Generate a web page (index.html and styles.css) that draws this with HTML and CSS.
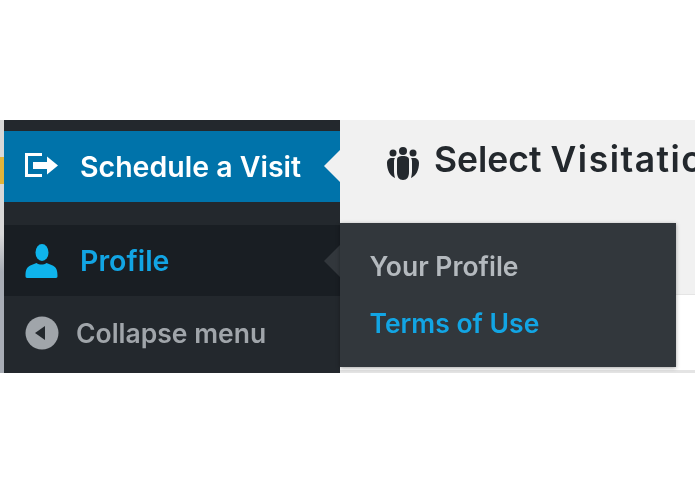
FILE: index.html
```html
<!DOCTYPE html>
<html lang="en">
<head>
<meta charset="utf-8">
<title>Schedule a Visit</title>
<link rel="stylesheet" href="styles.css">
</head>
<body>
<div class="frame">
  <div class="edge"><span class="edge-mark"></span></div>
  <nav class="sidebar">
    <div class="side-top"></div>
    <a class="item current">
      <svg class="icon" viewBox="0 0 35 35" aria-hidden="true"><path d="M1 4h17v3H4v18h14v3H1z" fill="#fff"/><path d="M9 13h14V7.500l11 9-11 9V20H9z" fill="#fff"/></svg>
      <span>Schedule a Visit</span>
    </a>
    <div class="side-gap"></div>
    <a class="item profile">
      <svg class="icon" viewBox="0 0 35 34" aria-hidden="true"><ellipse cx="18" cy="8.500" rx="6.500" ry="8.500" fill="#0fb4ec"/><path d="M3 34c-1 0-1.500-1-1.500-2 0-6 1-9 6-11l5-2c3 2 7 2 10 0l5 2c5 2 6 5 6 11 0 1-.5 2-1.500 2z" fill="#0fb4ec"/></svg>
      <span>Profile</span>
    </a>
    <a class="collapse">
      <svg class="collapse-icon" viewBox="0 0 34 34" aria-hidden="true"><circle cx="17" cy="17" r="16.500" fill="#a0a5aa"/><path d="M10 17l10-7v14z" fill="#23282d"/></svg>
      <span>Collapse menu</span>
    </a>
  </nav>
  <main class="content">
    <header class="page-head">
      <svg class="group-icon" viewBox="0 0 32 33" aria-hidden="true">
        <g fill="#23282d">
          <circle cx="16" cy="4" r="4"/><circle cx="6" cy="6" r="3.500"/><circle cx="26" cy="6" r="3.500"/>
          <path d="M10 13c0-3 2-4 6-4s6 1 6 4v12c0 5-2 8-6 8s-6-3-6-8z"/>
          <path d="M0 16c0-3 2-5 5-5h3c-.8 1-1 2-1 4v9c0 2 .3 4 1 7-5-2-8-8-8-15z"/>
          <path d="M32 16c0-3-2-5-5-5h-3c.8 1 1 2 1 4v9c0 2-.3 4-1 7 5-2 8-8 8-15z"/>
        </g>
      </svg>
      <h1>Select <span class="title-word">Visitation</span></h1>
    </header>
    <div class="panel"><div class="panel-foot"></div></div>
  </main>
  <div class="flyout">
    <a class="fly-link">Your Profile</a>
    <a class="fly-link active">Terms of Use</a>
  </div>
</div>
</body>
</html>
```
FILE: styles.css
```css
* { box-sizing: border-box; }
html, body { margin: 0; background: #fff; }
body { width: 695px; height: 494px; padding-top: 120px; overflow: hidden; font-family: Inter, "Liberation Sans", Arial, sans-serif; }
.frame { position: relative; display: flex; width: 695px; height: 253px; overflow: hidden; filter: blur(.6px); }
.edge { flex: 0 0 4px; background: linear-gradient(#d8d8d8, #d8d8d8 45%, #a8adb5 60%, #a8adb5); padding-top: 37px; }
.edge-mark { display: block; height: 27px; background: #e0b43c; }
.sidebar { flex: 0 0 336px; display: flex; flex-direction: column; background: #23282d; }
.side-top { height: 11px; }
.side-gap { height: 23px; }
.item { position: relative; display: flex; align-items: center; height: 71px; padding-left: 20px; gap: 21px; font-size: 28.500px; font-weight: 600; }
.item .icon { flex: 0 0 35px; width: 35px; height: 35px; }
.current { background: #0073aa; color: #fff; }
.current::after { content: ""; position: absolute; right: 0; top: 19px; border: 16px solid transparent; border-right-color: #f1f1f1; border-left-width: 0; }
.profile { background: #191e23; color: #12a5e4; }
.profile::after { content: ""; position: absolute; right: 0; top: 20px; border: 16px solid transparent; border-right-color: #32373c; border-left-width: 0; }
.profile .icon { height: 34px; }
.collapse { display: flex; align-items: center; gap: 17px; padding: 20px 0 0 21px; color: #a0a5aa; font-size: 26.500px; font-weight: 600; }
.collapse-icon { width: 34px; height: 34px; flex: none; }
.content { flex: 1; display: flex; flex-direction: column; min-width: 0; background: #f1f1f1; }
.page-head { display: flex; gap: 15px; height: 175px; padding: 0 0 0 47px; border-bottom: 1px solid #e5e5e5; }
.group-icon { width: 32px; height: 33px; margin-top: 27px; flex: none; }
h1 { margin: 17px 0 0; font-size: 35.500px; font-weight: 600; color: #23282d; white-space: nowrap; line-height: 46px; }
.title-word { letter-spacing: 1.5px; }
.panel { flex: 1; display: flex; flex-direction: column; justify-content: flex-end; background: #fff; }
.panel-foot { height: 3px; background: #e4e4e4; }
.flyout { position: absolute; left: 340px; top: 103px; width: 336px; height: 144px; background: #32373c; box-shadow: 0 1px 4px rgba(0,0,0,.35); padding-top: 26px; display: flex; flex-direction: column; gap: 23px; }
.fly-link { padding-left: 29.500px; color: #b4b9be; font-size: 26.500px; font-weight: 600; line-height: 34px; }
.fly-link.active { color: #12a5e4; }
```
